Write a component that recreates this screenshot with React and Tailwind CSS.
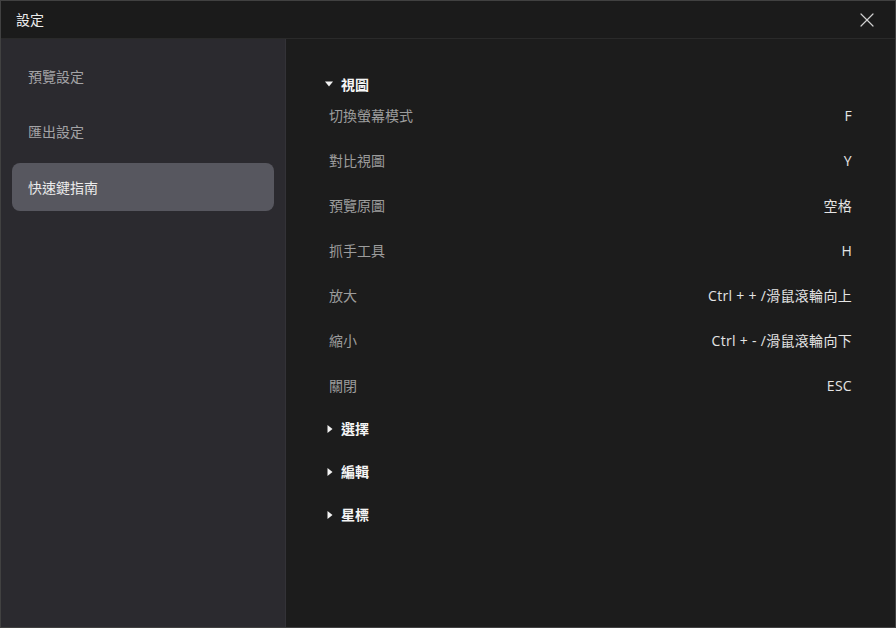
import { X } from "lucide-react";

const viewShortcuts = [
  { label: "切換螢幕模式", keys: "F" },
  { label: "對比視圖", keys: "Y" },
  { label: "預覽原圖", keys: "空格" },
  { label: "抓手工具", keys: "H" },
  { label: "放大", keys: "Ctrl + + /滑鼠滾輪向上" },
  { label: "縮小", keys: "Ctrl + - /滑鼠滾輪向下" },
  { label: "關閉", keys: "ESC" },
];

const menu = ["預覽設定", "匯出設定", "快速鍵指南"];

function Caret({ open }) {
  return open ? (
    <svg width="8" height="6" viewBox="0 0 8 6" className="mr-[8px]">
      <path d="M0 0.5 L8 0.5 L4 5.5 Z" fill="#f2f2f2" />
    </svg>
  ) : (
    <svg width="6" height="8" viewBox="0 0 6 8" className="ml-[2px] mr-[8px]">
      <path d="M0.5 0 L5.5 4 L0.5 8 Z" fill="#f2f2f2" />
    </svg>
  );
}

export default function App() {
  return (
    <div
      className="w-[896px] h-[628px] flex flex-col border border-[#414141] bg-[#1c1c1c] overflow-hidden text-[14px]"
      style={{ fontFamily: '"Open Sans", "Noto Sans CJK TC", sans-serif' }}
    >
      <div className="h-[38px] shrink-0 flex items-center justify-between pl-[15px] pr-[16px] bg-[#1b1b1b] border-b border-[#2a2a2a]">
        <span className="text-[#ececec]">設定</span>
        <X size={24} strokeWidth={1.2} className="text-[#cfcfcf]" />
      </div>

      <div className="flex flex-1 min-h-0">
        <div className="w-[285px] shrink-0 bg-[#2b2a2f] border-r border-[#333237] pt-[13px] px-[11px] flex flex-col gap-[7.5px]">
          {menu.map((item, i) => (
            <div
              key={item}
              className={
                "h-[48px] flex items-center px-[16px] rounded-[8px] " +
                (i === 2 ? "bg-[#57575f] text-[#ececec]" : "text-[#a3a3a6]")
              }
            >
              {item}
            </div>
          ))}
        </div>

        <div className="flex-1 pt-[37px] pl-[39px] pr-[43px]">
          <div className="h-4 flex items-center font-bold text-[#f5f5f5]">
            <Caret open />
            <span>視圖</span>
          </div>
          <div className="pl-[4px] mt-px mb-[-1px]">
            {viewShortcuts.map((s) => (
              <div key={s.label} className="h-[45px] flex items-center justify-between">
                <span className="text-[#9c9c9c]">{s.label}</span>
                <span className="text-[#e4e4e4] tracking-[0.3px]">{s.keys}</span>
              </div>
            ))}
          </div>
          {["選擇", "編輯", "星標"].map((s) => (
            <div key={s} className="h-[43px] flex items-center font-bold text-[#f5f5f5]">
              <Caret />
              <span>{s}</span>
            </div>
          ))}
        </div>
      </div>
    </div>
  );
}
